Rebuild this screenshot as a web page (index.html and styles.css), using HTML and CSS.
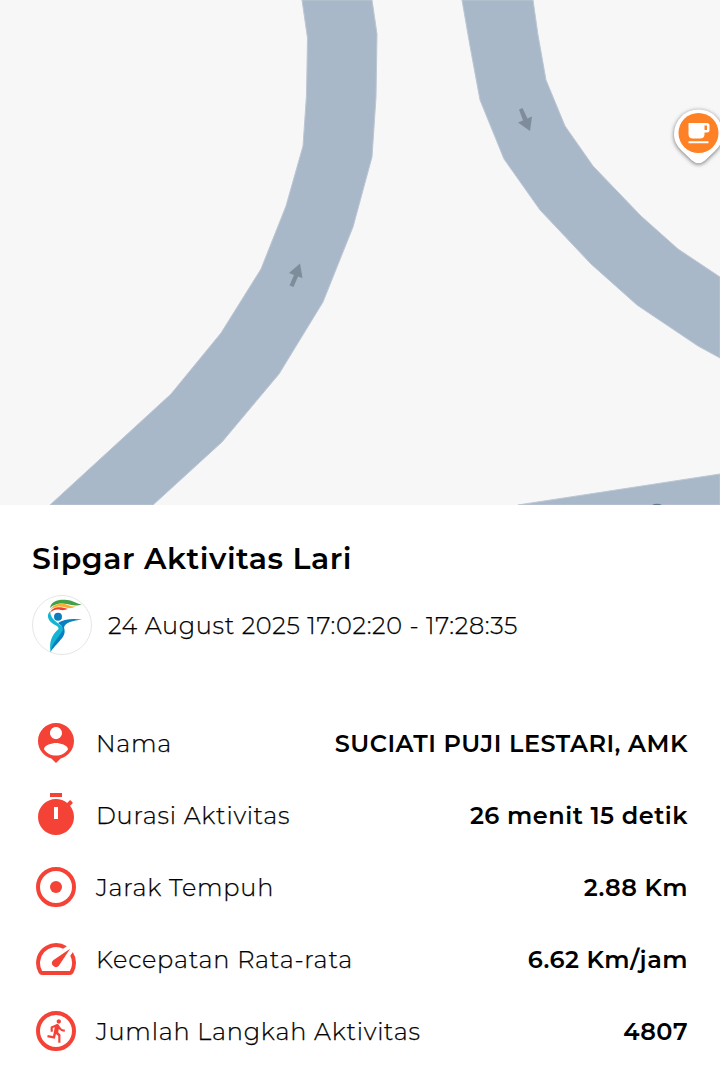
FILE: index.html
```
<!DOCTYPE html>
<html lang="id">
<head>
    <meta charset="UTF-8">
    <meta name="viewport" content="width=device-width, initial-scale=1.0">
    <title>Sipgar Aktivitas Lari</title>
    <link rel="stylesheet" href="styles.css">
</head>
<body>
    <!-- Peta -->
    <div class="map">
        <svg class="map-canvas" viewBox="0 0 720 505">
            <g class="road">
                <path d="M302 0L307.500 38L306.500 95L303 146L286 206L261 269L221 333L171 394L50 505H153L222 442L279 374L323 302L353 227L372 157L376 97L377 34L372 0Z"/>
                <path d="M462 0L470 46L480 100L504 159L540 210L591 264L637 305L698 346L720 358V277L678 249L641 216L593 166L565 126L546 80L538 35L533 0Z"/>
                <path d="M518 505L720 474V505Z"/>
            </g>
            <path class="arrow" d="M289.500 285.500L294 275L289 273L300 263.500L302.500 278L298 276.500L293.500 287Z"/>
            <path class="arrow" d="M519 109.500L522.500 108L527.500 118.500L532 116.500L530 131L518 122.500L523 120.500Z"/>
            <path class="arrow-edge" d="M652 505Q657 502.500 662 505Z"/>
            <g class="pin">
                <path class="pin-body" d="M698.500 109.500A24.500 24.500 0 0 0 674 134C674 141 677 146 682 151L692 160.500Q698.500 166 705 160.500L715 151C720 146 723 141 723 134A24.500 24.500 0 0 0 698.500 109.500Z"/>
                <circle class="pin-dot" cx="698.500" cy="133" r="20"/>
                <path class="pin-cup" fill-rule="evenodd" d="M688.500 123H707Q709.500 123 709.500 125.500V130Q709.500 132.500 707 132.500H704.500V134Q704.500 138.500 700 138.500H693Q688.500 138.500 688.500 134ZM704.500 125.500V130H707V125.500ZM688.500 141.300H708.500V143.300H688.500Z"/>
            </g>
        </svg>
    </div>

    <!-- Detail aktivitas -->
    <div class="detail">
        <h1 class="title">Sipgar Aktivitas Lari</h1>
        <div class="date-row">
            <svg class="logo" viewBox="0 0 60 60">
                <circle cx="30" cy="30" r="29.500" fill="#fff" stroke="#dedede" stroke-width=".8"/>
                <path fill="#43a047" d="M18 13C19 6 27 4 35 5C41 5.500 45 9 50 9.500C45 11 40 10.500 35 9C28 7.500 22 9 18 13Z"/>
                <path fill="#fbb034" d="M18 15C22 8 30 7.500 36 10Q40 12 44 11.500Q38 14.500 32 12Q24 10 18 15Z"/>
                <path fill="#e94335" d="M18 18C20 12 27 11 36 14Q31 16 27 14.500Q21 14 18 18Z"/>
                <circle cx="26" cy="21.700" r="4" fill="#0b7dbd"/>
                <path fill="#12b5d2" d="M18 16.500C14 20 16 26 22 29.500C25 31 27 32 26.500 34C20 40 17 46 18.500 57C22 46 31 42 32 34C30 29 19 27 18 16.500Z"/>
                <path fill="#087fbe" d="M26 28Q34 22.500 50 24.500C41 25.500 33 27.500 32 32.500C35 42 27 45 18.500 57C20 48 27 42 31 35C31 31.500 29 30 26 28Z"/>
            </svg>
            <span class="date">24 August 2025 17:02:20 - 17:28:35</span>
        </div>

        <div class="stats">
            <div class="stat">
                <svg class="icon" viewBox="0 0 24 24"><path d="M12 2c-4.970 0-9 4.030-9 9 0 4.170 2.840 7.670 6.690 8.690L12 22l2.310-2.310C18.160 18.670 21 15.170 21 11c0-4.970-4.030-9-9-9zm0 2c1.660 0 3 1.340 3 3s-1.340 3-3 3-3-1.340-3-3 1.340-3 3-3zm0 14.300c-2.500 0-4.710-1.280-6-3.220.030-1.990 4-3.080 6-3.080 1.990 0 5.970 1.090 6 3.080-1.290 1.940-3.500 3.220-6 3.220z"/></svg>
                <span class="label">Nama</span>
                <span class="value">SUCIATI PUJI LESTARI, AMK</span>
            </div>
            <div class="stat">
                <svg class="icon" viewBox="0 0 24 24"><path fill-rule="evenodd" d="M15 1H9v2h6V1zm-4 13h2V8h-2v6zm8.030-6.610l1.420-1.420c-.43-.51-.9-.99-1.410-1.410l-1.420 1.420C16.070 4.740 14.120 4 12 4c-4.970 0-9 4.030-9 9s4.020 9 9 9 9-4.030 9-9c0-2.120-.74-4.070-1.970-5.610z"/></svg>
                <span class="label">Durasi Aktivitas</span>
                <span class="value">26 menit 15 detik</span>
            </div>
            <div class="stat">
                <svg class="icon" viewBox="0 0 24 24"><circle class="ring" cx="12" cy="12" r="9"/><circle cx="12" cy="12" r="3"/></svg>
                <span class="label">Jarak Tempuh</span>
                <span class="value">2.88 Km</span>
            </div>
            <div class="stat">
                <svg class="icon" viewBox="0 0 24 24"><path d="M20.380 8.570l-1.230 1.850a8 8 0 0 1-.22 7.580H5.070A8 8 0 0 1 15.580 6.850l1.850-1.230A10 10 0 0 0 3.350 19a2 2 0 0 0 1.720 1h13.850a2 2 0 0 0 1.740-1 10 10 0 0 0-.27-10.440zM10.590 15.410a2 2 0 0 0 2.830 0l5.660-8.490-8.490 5.660a2 2 0 0 0 0 2.830z"/></svg>
                <span class="label">Kecepatan Rata-rata</span>
                <span class="value">6.62 Km/jam</span>
            </div>
            <div class="stat">
                <svg class="icon" viewBox="0 0 24 24"><circle class="ring" cx="12" cy="12" r="9"/><path transform="translate(6.050 5.300) scale(.545)" d="M13.490 5.480c1.100 0 2-.9 2-2s-.9-2-2-2-2 .9-2 2 .9 2 2 2zm-3.600 13.900l1-4.400 2.100 2v6h2v-7.500l-2.100-2 .6-3c1.300 1.500 3.300 2.500 5.500 2.500v-2c-1.900 0-3.500-1-4.300-2.400l-1-1.600c-.4-.6-1-1-1.700-1-.3 0-.5.1-.8.1l-5.200 2.200v4.700h2v-3.400l1.800-.7-1.600 8.100-4.900-1-.4 2 7 1.400z"/></svg>
                <span class="label">Jumlah Langkah Aktivitas</span>
                <span class="value">4807</span>
            </div>
        </div>
    </div>
</body>
</html>
```
FILE: styles.css
```
* {
    box-sizing: border-box;
}

body {
    margin: 0;
    height: 1083px;
    overflow: hidden;
    background-color: #fff;
    color: #000;
    font-family: Montserrat, Inter, sans-serif;
}

/* Peta */
.map {
    height: 505px;
    overflow: hidden;
    background-color: #f7f7f7;
}

.map-canvas {
    display: block;
    width: 720px;
    height: 505px;
}

.road {
    fill: #a9b8c9;
    stroke: #bcc7d4;
    stroke-width: 1;
}

.arrow {
    fill: #7f8c9a;
}

.arrow-edge {
    fill: #60798c;
}

.pin-body {
    fill: #fff;
    filter: drop-shadow(0 1px 2px rgba(0, 0, 0, 0.55));
}

.pin-dot {
    fill: #ff8126;
}

.pin-cup {
    fill: #fff;
}

/* Detail aktivitas */
.detail {
    padding: 34px 32px 0;
}

.title {
    margin: 0;
    font-size: 30px;
    font-weight: 600;
    line-height: 40px;
    letter-spacing: 0.55px;
}

.date-row {
    display: flex;
    align-items: center;
    gap: 16px;
    margin-top: 16px;
}

.logo {
    width: 60px;
    height: 60px;
}

.date,
.label {
    font-size: 24px;
    font-weight: 300;
    white-space: nowrap;
    -webkit-text-stroke: 0.25px #000;
}

.date {
    letter-spacing: 0.66px;
}

.label {
    letter-spacing: 0.76px;
}

.stats {
    margin-top: 52px;
}

.stat {
    display: flex;
    align-items: center;
    height: 72px;
}

.icon {
    width: 48px;
    height: 48px;
    margin-right: 16px;
    fill: #f44336;
}

.ring {
    fill: none;
    stroke: #f44336;
    stroke-width: 2;
}

.value {
    margin-left: auto;
    font-size: 24px;
    font-weight: 600;
    letter-spacing: 0.5px;
    white-space: nowrap;
}
```
